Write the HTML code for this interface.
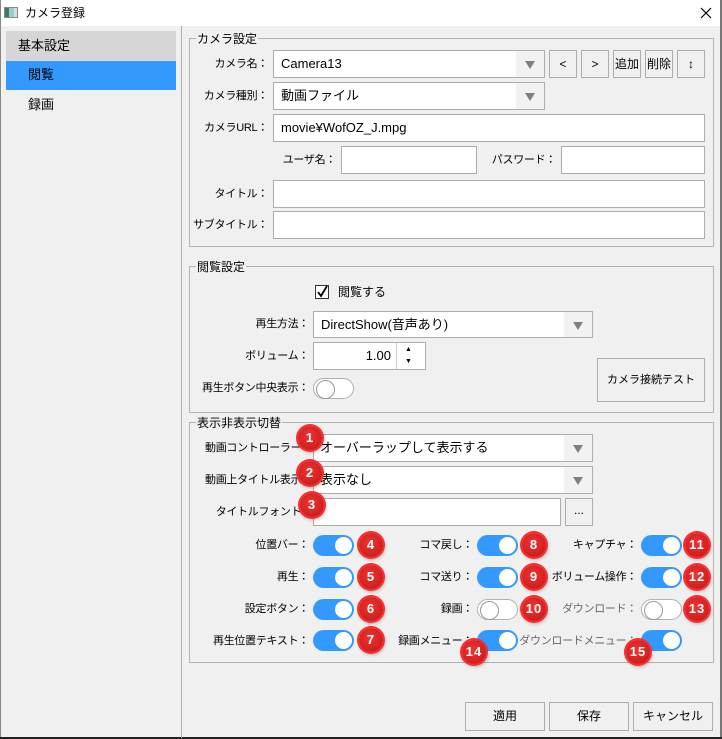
<!DOCTYPE html>
<html><head><meta charset="utf-8"><style>
*{box-sizing:border-box;margin:0;padding:0}
body{width:722px;height:739px;overflow:hidden;background:#f0f0f0;font-family:"Liberation Sans","Noto Sans CJK JP",sans-serif;font-size:12px;color:#000;position:relative}
div,span{position:absolute}
.t{white-space:nowrap;line-height:16px}
.r{text-align:right;font-size:11px;letter-spacing:-0.3px}
.in{background:#fff;border:1px solid #adadad}
.cb{background:#fff;border:1px solid #adadad}
.cb .ar{right:0;top:0;bottom:0;width:28px;background:#f2f2f2}
.cb .ar:after{content:"";position:absolute;left:9px;top:10px;border-left:5px solid transparent;border-right:5px solid transparent;border-top:8px solid #808080}
.cb .v{left:7px;top:5px;white-space:nowrap;line-height:16px;font-size:13px}
.btn{border:1px solid #adadad;text-align:center;line-height:26px;white-space:nowrap;background:#f0f0f0}
.grp{border:1px solid #b4b4b4}
.gt{background:#f0f0f0;padding:0 1px;white-space:nowrap;line-height:14px}
.tg{width:41px;height:21px;border-radius:11px;background:#3399ff}
.tg:after{content:"";position:absolute;right:2px;top:2px;width:17px;height:17px;border-radius:50%;background:#fff}
.tg.off{background:#fff;border:1px solid #b0b0b0}
.tg.off:after{left:2px;top:1px;right:auto;border:1px solid #999}
.bd{width:24px;height:24px;border-radius:50%;background:radial-gradient(circle at 45% 40%,#e33 0%,#d42222 60%,#b01010 100%);box-shadow:0 0 0 2px #ff2a2a,1px 2px 4px rgba(0,0,0,.4);color:#fff;font-weight:bold;font-size:13px;text-align:center;line-height:24px;font-family:"Liberation Sans",sans-serif;letter-spacing:1px}
.g{color:#666}
</style></head><body>
<div style="left:0;top:0;width:722px;height:26px;background:#fff"></div>
<div style="left:4px;top:7px;width:14px;height:11px;border:1px solid #888;background:linear-gradient(90deg,#3a7a6a 0 4px,#9cc 4px 9px,#ddd 9px)"></div>
<div class="t" style="left:25px;top:5px">カメラ登録</div>
<svg style="position:absolute;left:700px;top:7px" width="12" height="12"><path d="M1 1L11 11M11 1L1 11" stroke="#000" stroke-width="1.2"/></svg>
<div style="left:0;top:0;width:1px;height:739px;background:#888"></div>
<div style="left:720px;top:0;width:2px;height:739px;background:#777"></div>
<div style="left:0;top:737px;width:722px;height:2px;background:#222"></div>
<div style="left:181px;top:26px;width:1px;height:712px;background:#adadad"></div>
<div style="left:6px;top:31px;width:170px;height:30px;background:#d6d6d6"></div>
<div class="t" style="left:18px;top:38px;font-size:13px">基本設定</div>
<div style="left:6px;top:61px;width:170px;height:29px;background:#3399ff"></div>
<div class="t" style="left:28px;top:67px;font-size:13px">閲覧</div>
<div class="t" style="left:28px;top:97px;font-size:13px">録画</div>

<div class="grp" style="left:189px;top:38px;width:525px;height:209px"></div>
<div class="gt" style="left:196px;top:32px">カメラ設定</div>
<div class="t r" style="right:454px;top:56px">カメラ名：</div>
<div class="cb" style="left:273px;top:50px;width:272px;height:28px"><span class="v">Camera13</span><span class="ar"></span></div>
<div class="btn" style="left:549px;top:50px;width:28px;height:28px">&lt;</div>
<div class="btn" style="left:581px;top:50px;width:28px;height:28px">&gt;</div>
<div class="btn" style="left:613px;top:50px;width:28px;height:28px">追加</div>
<div class="btn" style="left:645px;top:50px;width:28px;height:28px">削除</div>
<div class="btn" style="left:677px;top:50px;width:28px;height:28px">↕</div>
<div class="t r" style="right:454px;top:88px">カメラ種別：</div>
<div class="cb" style="left:273px;top:82px;width:272px;height:28px"><span class="v">動画ファイル</span><span class="ar"></span></div>
<div class="t r" style="right:454px;top:120px">カメラURL：</div>
<div class="in" style="left:273px;top:114px;width:432px;height:28px"><span class="v t" style="left:7px;top:5px;font-size:13px">movie¥WofOZ_J.mpg</span></div>
<div class="t r" style="right:386px;top:152px">ユーザ名：</div>
<div class="in" style="left:341px;top:146px;width:136px;height:28px"></div>
<div class="t r" style="right:166px;top:152px">パスワード：</div>
<div class="in" style="left:561px;top:146px;width:144px;height:28px"></div>
<div class="t r" style="right:454px;top:186px">タイトル：</div>
<div class="in" style="left:273px;top:180px;width:432px;height:28px"></div>
<div class="t r" style="right:454px;top:217px">サブタイトル：</div>
<div class="in" style="left:273px;top:211px;width:432px;height:28px"></div>

<div class="grp" style="left:189px;top:266px;width:525px;height:147px"></div>
<div class="gt" style="left:196px;top:260px">閲覧設定</div>
<div style="left:315px;top:285px;width:14px;height:14px;border:1px solid #333;background:#fff"></div>
<svg style="position:absolute;left:316px;top:285px" width="13" height="13"><path d="M2 7L5 11L11 1" stroke="#000" stroke-width="1.8" fill="none"/></svg>
<div class="t" style="left:338px;top:284px">閲覧する</div>
<div class="t r" style="right:413px;top:316px">再生方法：</div>
<div class="cb" style="left:313px;top:311px;width:280px;height:27px"><span class="v">DirectShow(音声あり)</span><span class="ar"></span></div>
<div class="t r" style="right:413px;top:348px">ボリューム：</div>
<div class="in" style="left:313px;top:342px;width:113px;height:28px"><span class="t" style="right:34px;top:5px;font-size:13px">1.00</span>
<span style="left:82px;top:0;width:1px;height:26px;background:#ccc"></span>
<span class="t" style="left:91px;top:-1px;font-size:7px">▲</span><span class="t" style="left:91px;top:11px;font-size:7px">▼</span></div>
<div class="t r" style="right:413px;top:380px">再生ボタン中央表示：</div>
<div class="tg off" style="left:313px;top:378px"></div>
<div class="btn" style="left:597px;top:358px;width:108px;height:44px;line-height:42px;font-size:11px">カメラ接続テスト</div>

<div class="grp" style="left:189px;top:422px;width:525px;height:241px"></div>
<div class="gt" style="left:196px;top:416px">表示非表示切替</div>
<div class="t r" style="right:410px;top:440px">動画コントローラー：</div>
<div class="cb" style="left:313px;top:434px;width:280px;height:28px"><span class="v" style="left:6px">オーバーラップして表示する</span><span class="ar"></span></div>
<div class="t r" style="right:410px;top:472px">動画上タイトル表示：</div>
<div class="cb" style="left:313px;top:466px;width:280px;height:28px"><span class="v" style="left:6px">表示なし</span><span class="ar"></span></div>
<div class="t r" style="right:410px;top:504px">タイトルフォント：</div>
<div class="in" style="left:313px;top:498px;width:248px;height:28px"></div>
<div class="btn" style="left:565px;top:498px;width:28px;height:28px;line-height:22px">...</div>

<div class="t r" style="right:413px;top:537px">位置バー：</div><div class="tg" style="left:313px;top:535px"></div>
<div class="t r" style="right:413px;top:569px">再生：</div><div class="tg" style="left:313px;top:567px"></div>
<div class="t r" style="right:413px;top:601px">設定ボタン：</div><div class="tg" style="left:313px;top:599px"></div>
<div class="t r" style="right:413px;top:633px">再生位置テキスト：</div><div class="tg" style="left:313px;top:630px"></div>

<div class="t r" style="right:249px;top:537px">コマ戻し：</div><div class="tg" style="left:477px;top:535px"></div>
<div class="t r" style="right:249px;top:569px">コマ送り：</div><div class="tg" style="left:477px;top:567px"></div>
<div class="t r" style="right:249px;top:601px">録画：</div><div class="tg off" style="left:477px;top:599px"></div>
<div class="t r" style="right:249px;top:633px">録画メニュー：</div><div class="tg" style="left:477px;top:630px"></div>

<div class="t r" style="right:85px;top:537px">キャプチャ：</div><div class="tg" style="left:641px;top:535px"></div>
<div class="t r" style="right:85px;top:569px">ボリューム操作：</div><div class="tg" style="left:641px;top:567px"></div>
<div class="t r g" style="right:85px;top:601px">ダウンロード：</div><div class="tg off" style="left:641px;top:599px"></div>
<div class="t r g" style="right:85px;top:633px">ダウンロードメニュー：</div><div class="tg" style="left:641px;top:630px"></div>

<div class="bd" style="left:298px;top:426px">1</div>
<div class="bd" style="left:298px;top:461px">2</div>
<div class="bd" style="left:300px;top:493px">3</div>
<div class="bd" style="left:359px;top:533px">4</div>
<div class="bd" style="left:359px;top:565px">5</div>
<div class="bd" style="left:359px;top:597px">6</div>
<div class="bd" style="left:359px;top:628px">7</div>
<div class="bd" style="left:522px;top:533px">8</div>
<div class="bd" style="left:522px;top:565px">9</div>
<div class="bd" style="left:522px;top:597px">10</div>
<div class="bd" style="left:685px;top:533px">11</div>
<div class="bd" style="left:685px;top:565px">12</div>
<div class="bd" style="left:685px;top:597px">13</div>
<div class="bd" style="left:462px;top:640px">14</div>
<div class="bd" style="left:626px;top:640px">15</div>

<div class="btn" style="left:465px;top:702px;width:80px;height:29px">適用</div>
<div class="btn" style="left:549px;top:702px;width:80px;height:29px">保存</div>
<div class="btn" style="left:633px;top:702px;width:80px;height:29px">キャンセル</div>
</body></html>
